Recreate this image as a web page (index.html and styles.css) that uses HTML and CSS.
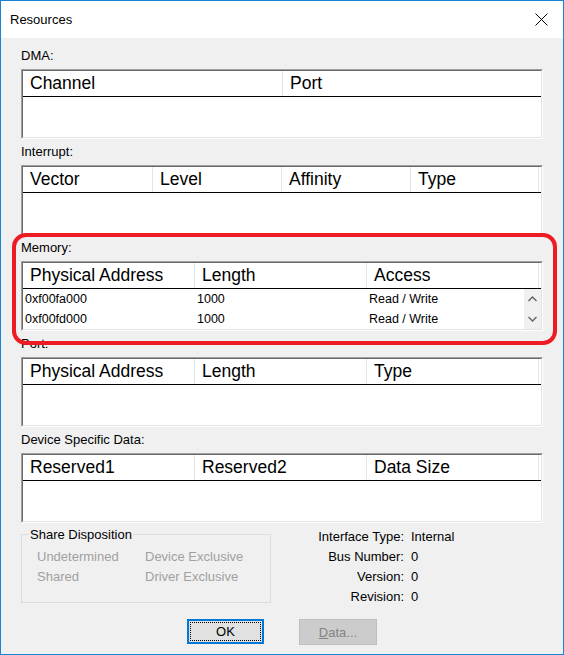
FILE: index.html
```html
<!DOCTYPE html>
<html>
<head>
<meta charset="utf-8">
<title>Resources</title>
<link rel="stylesheet" href="styles.css">
</head>
<body>
<div class="window">
  <div class="titlebar">
    <span class="title">Resources</span>
    <span class="close"><svg width="13" height="13" viewBox="0 0 13 13"><path d="M0.5 0.5 L12.5 12.5 M12.5 0.5 L0.5 12.5" stroke="#000" stroke-width="1" fill="none"/></svg></span>
  </div>
  <div class="content">
    <section class="group">
      <div class="label">DMA:</div>
      <div class="lv"><div class="lv-in">
        <div class="lv-head cols-dma"><div class="hc">Channel</div><div class="hc last">Port</div></div>
        <div class="lv-body"></div>
      </div></div>
    </section>
    <section class="group">
      <div class="label">Interrupt:</div>
      <div class="lv"><div class="lv-in">
        <div class="lv-head cols-int"><div class="hc">Vector</div><div class="hc">Level</div><div class="hc">Affinity</div><div class="hc">Type</div></div>
        <div class="lv-body"></div>
      </div></div>
    </section>
    <section class="group">
      <div class="label">Memory:</div>
      <div class="lv"><div class="lv-in">
        <div class="lv-head cols-3"><div class="hc">Physical Address</div><div class="hc">Length</div><div class="hc">Access</div></div>
        <div class="lv-body scrolled">
          <div class="rows">
            <div class="row cols-3"><span>0xf00fa000</span><span>1000</span><span>Read / Write</span></div>
            <div class="row cols-3"><span>0xf00fd000</span><span>1000</span><span>Read / Write</span></div>
          </div>
          <div class="scrollbar">
            <span class="sb-btn"><svg width="9" height="6" viewBox="0 0 9 6"><path d="M0.5 5 L4.5 1 L8.5 5" stroke="#606060" stroke-width="1.3" fill="none"/></svg></span>
            <span class="sb-btn"><svg width="9" height="6" viewBox="0 0 9 6"><path d="M0.5 1 L4.5 5 L8.5 1" stroke="#606060" stroke-width="1.3" fill="none"/></svg></span>
          </div>
        </div>
      </div></div>
    </section>
    <section class="group">
      <div class="label">Port:</div>
      <div class="lv"><div class="lv-in">
        <div class="lv-head cols-3"><div class="hc">Physical Address</div><div class="hc">Length</div><div class="hc">Type</div></div>
        <div class="lv-body"></div>
      </div></div>
    </section>
    <section class="group">
      <div class="label">Device Specific Data:</div>
      <div class="lv"><div class="lv-in">
        <div class="lv-head cols-3"><div class="hc">Reserved1</div><div class="hc">Reserved2</div><div class="hc">Data Size</div></div>
        <div class="lv-body"></div>
      </div></div>
    </section>
    <div class="bottom">
      <fieldset class="share">
        <legend>Share Disposition</legend>
        <div class="share-grid">
          <span>Undetermined</span><span>Device Exclusive</span>
          <span>Shared</span><span>Driver Exclusive</span>
        </div>
      </fieldset>
      <div class="info">
        <span class="k">Interface Type:</span><span>Internal</span>
        <span class="k">Bus Number:</span><span>0</span>
        <span class="k">Version:</span><span>0</span>
        <span class="k">Revision:</span><span>0</span>
      </div>
    </div>
    <div class="buttons">
      <button class="btn ok"><span class="focus">OK</span></button>
      <button class="btn disabled"><span><u>D</u>ata...</span></button>
    </div>
  </div>
  <div class="highlight"></div>
</div>
</body>
</html>
```
FILE: styles.css
```css
html, body {
  margin: 0;
  padding: 0;
}
.window {
  position: relative;
  width: 564px;
  height: 655px;
  box-sizing: border-box;
  border: 1px solid #1883d7;
  background: #f0f0f0;
  font-family: "Liberation Sans", Arial, sans-serif;
  font-size: 13px;
  color: #000;
  overflow: hidden;
  display: flex;
  flex-direction: column;
}
.titlebar {
  height: 37px;
  flex: none;
  background: #fff;
  display: flex;
  align-items: center;
  justify-content: space-between;
}
.title {
  padding-left: 9px;
  font-size: 13px;
}
.close {
  width: 44px;
  height: 37px;
  display: flex;
  align-items: center;
  justify-content: center;
}
.close svg {
  display: block;
}
.content {
  padding: 10px 20px 0 20px;
}
.group + .group {
  margin-top: 5px;
}
.label {
  line-height: 15px;
  margin-bottom: 6px;
}
.lv {
  height: 70px;
  box-sizing: border-box;
  border: 1px solid;
  border-color: #a0a0a0 #ffffff #ffffff #a0a0a0;
}
.lv-in {
  height: 100%;
  box-sizing: border-box;
  border: 1px solid;
  border-color: #696969 #e3e3e3 #e3e3e3 #696969;
  background: #fff;
  overflow: hidden;
  display: flex;
  flex-direction: column;
}
.lv-head {
  display: grid;
  height: 25px;
  flex: none;
  border-bottom: 1px solid #000;
  font-size: 17.5px;
}
.cols-dma {
  grid-template-columns: 260px 1fr;
}
.cols-int {
  grid-template-columns: 130px 129px 129px 128px;
}
.cols-3 {
  grid-template-columns: 172px 172px 172px;
}
.hc {
  box-sizing: border-box;
  padding-left: 7px;
  line-height: 25px;
  border-right: 1px solid #e5e5e5;
  white-space: nowrap;
  overflow: hidden;
}
.hc.last {
  border-right: none;
}
.lv-body {
  flex: 1;
  min-height: 0;
}
.scrolled {
  display: flex;
}
.rows {
  flex: 1;
  min-width: 0;
  overflow: hidden;
}
.row {
  display: grid;
  height: 20px;
  line-height: 20px;
  font-size: 12.5px;
}
.row span {
  padding-left: 2px;
  white-space: nowrap;
}
.scrollbar {
  width: 17px;
  flex: none;
  background: #f0f0f0;
  display: flex;
  flex-direction: column;
}
.sb-btn {
  flex: 1;
  display: flex;
  align-items: center;
  justify-content: center;
}
.sb-btn svg {
  display: block;
}
.bottom {
  margin-top: 4px;
  display: flex;
  align-items: flex-start;
}
.share {
  margin: 0;
  width: 250px;
  height: 76px;
  box-sizing: border-box;
  padding: 0 0 0 7px;
  border: 1px solid #dcdcdc;
  min-width: 0;
}
.share legend {
  padding: 0 1px;
  line-height: 15px;
}
.share-grid {
  margin: 5px 0 0 8px;
  display: grid;
  grid-template-columns: 108px auto;
  line-height: 20px;
  color: #a0a0a0;
}
.info {
  display: grid;
  grid-template-columns: 135px auto;
  column-gap: 7px;
  line-height: 20px;
  margin-left: -2px;
}
.info .k {
  text-align: right;
}
.buttons {
  margin-top: 12px;
  display: flex;
  justify-content: center;
  gap: 35px;
}
.btn {
  font-family: "Liberation Sans", Arial, sans-serif;
  font-size: 13px;
  margin: 0;
  box-sizing: border-box;
  display: flex;
  align-items: stretch;
}
.btn.ok {
  width: 77px;
  height: 25px;
  border: 2px solid #0078d7;
  background: #e1e1e1;
  color: #000;
  padding: 1px;
}
.btn.ok .focus {
  flex: 1;
  border: 1px dotted #000;
  display: flex;
  align-items: center;
  justify-content: center;
}
.btn.disabled {
  width: 78px;
  height: 26px;
  border: 1px solid #bfbfbf;
  background: #cccccc;
  color: #838383;
  padding: 0;
}
.btn.disabled span {
  flex: 1;
  display: flex;
  align-items: center;
  justify-content: center;
}
.highlight {
  position: absolute;
  left: 11px;
  top: 232px;
  width: 545px;
  height: 112px;
  box-sizing: border-box;
  border: 4px solid #ed1c24;
  border-radius: 14px;
  pointer-events: none;
}
```
